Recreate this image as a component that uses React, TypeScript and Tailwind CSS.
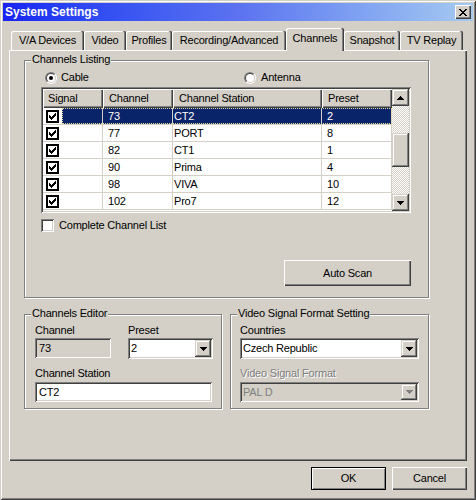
import React from "react";

// Win classic bevels
const raised = "shadow-[inset_1px_1px_#fff,inset_-1px_-1px_#404040,inset_-2px_-2px_#808080]";
const raisedSmall = "shadow-[inset_-1px_-1px_#404040,inset_1px_1px_#d4d0c8,inset_-2px_-2px_#808080,inset_2px_2px_#fff]";
const sunken = "shadow-[inset_1px_1px_#808080,inset_-1px_-1px_#fff,inset_2px_2px_#404040,inset_-2px_-2px_#d4d0c8]";

const CLOSE = ["XX....XX", ".XX..XX.", "..XXXX..", "...XX...", "..XXXX..", ".XX..XX.", "XX....XX"];
const DOWN = ["XXXXXXX", ".XXXXX.", "..XXX..", "...X..."];
const UP = ["...X...", "..XXX..", ".XXXXX.", "XXXXXXX"];
const CHECK = [
  "XXXXXXXXXXXXX",
  "XXXXXXXXXXXXX",
  "XX.........XX",
  "XX.......X.XX",
  "XX......XX.XX",
  "XX.X...XXX.XX",
  "XX.XX.XXX..XX",
  "XX.XXXXX...XX",
  "XX..XXX....XX",
  "XX...X.....XX",
  "XX.........XX",
  "XXXXXXXXXXXXX",
  "XXXXXXXXXXXXX",
];

function Pix({ rows, color = "#000", bg }: { rows: string[]; color?: string; bg?: string }) {
  const w = rows[0].length;
  const h = rows.length;
  let d = "";
  rows.forEach((r, y) => {
    [...r].forEach((c, x) => {
      if (c === "X") d += `M${x} ${y}h1v1h-1z`;
    });
  });
  return (
    <svg width={w} height={h} viewBox={`0 0 ${w} ${h}`} shapeRendering="crispEdges" className="block">
      {bg && <rect width={w} height={h} fill={bg} />}
      <path d={d} fill={color} />
    </svg>
  );
}

function Radio({ checked }: { checked?: boolean }) {
  return (
    <span className="block h-[12px] w-[12px] rounded-full border border-t-[#808080] border-l-[#808080] border-b-white border-r-white">
      <span className="flex h-full w-full items-center justify-center rounded-full border border-t-[#404040] border-l-[#404040] border-b-[#d4d0c8] border-r-[#d4d0c8] bg-white">
        {checked && <span className="block h-[4px] w-[4px] rounded-full bg-black" />}
      </span>
    </span>
  );
}

function GroupBox({ title, className, children }: { title: string; className: string; children: React.ReactNode }) {
  return (
    <div className={`relative flex flex-col border border-[#808080] shadow-[inset_1px_1px_#fff,1px_1px_#fff] ${className}`}>
      <span className="absolute left-[6px] top-[-8px] bg-[#d4d0c8] px-[1px] leading-[13px]">{title}</span>
      {children}
    </div>
  );
}

function Combo({ value, className, disabled }: { value: string; className: string; disabled?: boolean }) {
  return (
    <div className={`flex p-[2px] ${sunken} ${className} ${disabled ? "bg-[#d4d0c8] text-[#808080]" : "bg-white"}`}>
      <span className="flex flex-1 items-center pl-[1px]">{value}</span>
      <span className={`flex w-[16px] items-center justify-center bg-[#d4d0c8] ${raisedSmall}`}>
        <Pix rows={DOWN} color={disabled ? "#808080" : "#000"} />
      </span>
    </div>
  );
}

const TABS: { label: string; w: string; active?: boolean }[] = [
  { label: "V/A Devices", w: "w-[73px]" },
  { label: "Video", w: "w-[42px]" },
  { label: "Profiles", w: "w-[46px]" },
  { label: "Recording/Advanced", w: "w-[114px]" },
  { label: "Channels", w: "w-[58px]", active: true },
  { label: "Snapshot", w: "w-[56px]" },
  { label: "TV Replay", w: "w-[63px]" },
];

const CHANNELS: [number, string, number][] = [
  [73, "CT2", 2],
  [77, "PORT", 8],
  [82, "CT1", 1],
  [90, "Prima", 4],
  [98, "VIVA", 10],
  [102, "Pro7", 12],
];

const grid = "border-r border-b border-[#d4d0c8]";

export default function App() {
  return (
    <div className="flex h-[500px] w-[476px] flex-col bg-[#d4d0c8] font-['Liberation_Sans',Arial,sans-serif] text-[11px] leading-[13px] tracking-[-0.2px] text-black select-none shadow-[inset_1px_1px_#d4d0c8,inset_-1px_-1px_#404040,inset_2px_2px_#fff,inset_-2px_-2px_#808080]">
      {/* Title bar */}
      <div className="mx-[3px] mt-[3px] flex h-[18px] items-center bg-gradient-to-r from-[#1a22f2] via-[#5c72f0] to-[#a6caf0] pl-[2px] pr-[2px]">
        <span className="flex-1 text-[12px] font-bold tracking-normal text-white">System Settings</span>
        <span className={`flex h-[14px] w-[16px] items-center justify-center bg-[#d4d0c8] ${raised}`}>
          <Pix rows={CLOSE} />
        </span>
      </div>

      {/* Tabs */}
      <div className="ml-[11px] mt-[7px] flex h-[22px] items-end">
        {TABS.map((t) =>
          t.active ? (
            <div
              key={t.label}
              className={`relative z-10 -mb-[1px] flex h-[23px] items-center justify-center rounded-t-[2px] bg-[#d4d0c8] pb-[2px] shadow-[inset_-1px_0_#404040,inset_-2px_0_#808080,inset_1px_1px_#fff] ${t.w}`}
            >
              {t.label}
            </div>
          ) : (
            <div
              key={t.label}
              className={`flex h-[19px] items-center justify-center rounded-t-[2px] shadow-[inset_-1px_0_#404040,inset_-2px_0_#808080,inset_1px_1px_#fff] ${t.w}`}
            >
              {t.label}
            </div>
          )
        )}
      </div>

      {/* Tab panel */}
      <div className={`relative ml-[9px] flex h-[411px] w-[458px] flex-col ${raised}`}>
        <GroupBox title="Channels Listing" className="ml-[15px] mt-[10px] h-[238px] w-[405px]">
          <div className="ml-[20px] mt-[10px] flex h-[13px] items-center">
            <div className="flex w-[199px] items-center gap-[4px]">
              <Radio checked />
              <span>Cable</span>
            </div>
            <div className="flex items-center gap-[5px]">
              <Radio />
              <span>Antenna</span>
            </div>
          </div>

          {/* List view */}
          <div className={`ml-[16px] mt-[3px] flex h-[126px] w-[370px] bg-white p-[2px] ${sunken}`}>
            <div className="flex w-[349px] flex-col">
              <div className="flex h-[19px] bg-[#d4d0c8]">
                <div className={`flex w-[60px] items-center pl-[5px] ${raised}`}>Signal</div>
                <div className={`flex w-[70px] items-center pl-[6px] ${raised}`}>Channel</div>
                <div className={`flex w-[149px] items-center pl-[6px] ${raised}`}>Channel Station</div>
                <div className={`flex w-[70px] items-center pl-[6px] ${raised}`}>Preset</div>
              </div>
              {CHANNELS.map(([ch, st, pr], i) => {
                const sel = i === 0;
                const cell = sel ? "bg-[#0a246a] text-white" : "";
                return (
                  <div key={ch} className="relative flex h-[17px]">
                    <div className={`flex w-[60px] items-center ${grid}`}>
                      <span className="ml-[3px]">
                        <Pix rows={CHECK} bg="#fff" />
                      </span>
                      {sel && <span className="ml-[3px] h-full flex-1 bg-[#0a246a]" />}
                    </div>
                    <div className={`flex w-[70px] items-center pl-[5px] ${grid} ${cell}`}>{ch}</div>
                    <div className={`flex w-[149px] items-center pl-[1px] ${grid} ${cell}`}>{st}</div>
                    <div className={`flex w-[70px] items-center pl-[5px] ${grid} ${cell}`}>{pr}</div>
                    {sel && (
                      <span className="pointer-events-none absolute bottom-[1px] left-[19px] right-0 top-0 border border-dotted border-[#e8d8a0]" />
                    )}
                  </div>
                );
              })}
            </div>
            {/* Scroll bar */}
            <div className="flex w-[17px] flex-col">
              <span className={`flex h-[17px] items-center justify-center bg-[#d4d0c8] ${raisedSmall}`}>
                <Pix rows={UP} />
              </span>
              <div className="flex flex-1 flex-col bg-[repeating-conic-gradient(#d4d0c8_0_25%,#fff_0_50%)] bg-[length:2px_2px]">
                <span className={`mt-[27px] block h-[34px] bg-[#d4d0c8] ${raisedSmall}`} />
              </div>
              <span className={`flex h-[17px] items-center justify-center bg-[#d4d0c8] ${raisedSmall}`}>
                <Pix rows={DOWN} />
              </span>
            </div>
          </div>

          <div className="ml-[16px] mt-[6px] flex h-[13px] items-center gap-[5px]">
            <span className={`block h-[13px] w-[13px] bg-white ${sunken}`} />
            <span>Complete Channel List</span>
          </div>

          <div className={`ml-[259px] mt-[28px] flex h-[26px] w-[127px] items-center justify-center ${raised}`}>
            Auto Scan
          </div>
        </GroupBox>

        <div className="ml-[15px] mt-[16px] flex gap-[8px]">
          <GroupBox title="Channels Editor" className="h-[95px] w-[198px]">
            <div className="ml-[10px] mt-[9px] flex">
              <div className="flex w-[93px] flex-col">
                <span>Channel</span>
                <div className={`mt-[1px] flex h-[20px] w-[76px] items-center pl-[4px] ${sunken}`}>73</div>
              </div>
              <div className="flex flex-col">
                <span>Preset</span>
                <Combo value="2" className="mt-[1px] h-[21px] w-[85px]" />
              </div>
            </div>
            <div className="ml-[10px] mt-[8px] flex flex-col">
              <span>Channel Station</span>
              <div className={`mt-[2px] flex h-[20px] w-[177px] items-center bg-white pl-[4px] ${sunken}`}>CT2</div>
            </div>
          </GroupBox>

          <GroupBox title="Video Signal Format Setting" className="h-[95px] w-[199px]">
            <div className="ml-[9px] mt-[9px] flex flex-col">
              <span>Countries</span>
              <Combo value="Czech Republic" className="mt-[1px] h-[21px] w-[179px]" />
            </div>
            <div className="ml-[9px] mt-[8px] flex flex-col">
              <span className="text-[#808080] [text-shadow:1px_1px_#fff]">Video Signal Format</span>
              <Combo value="PAL D" disabled className="mt-[2px] h-[20px] w-[179px]" />
            </div>
          </GroupBox>
        </div>
      </div>

      {/* Dialog buttons */}
      <div className="mr-[9px] mt-[6px] flex justify-end gap-[6px]">
        <div className="flex h-[23px] w-[75px] items-center justify-center border border-black shadow-[inset_1px_1px_#fff,inset_-1px_-1px_#808080]">
          OK
        </div>
        <div className={`flex h-[23px] w-[75px] items-center justify-center ${raised}`}>Cancel</div>
      </div>
    </div>
  );
}
